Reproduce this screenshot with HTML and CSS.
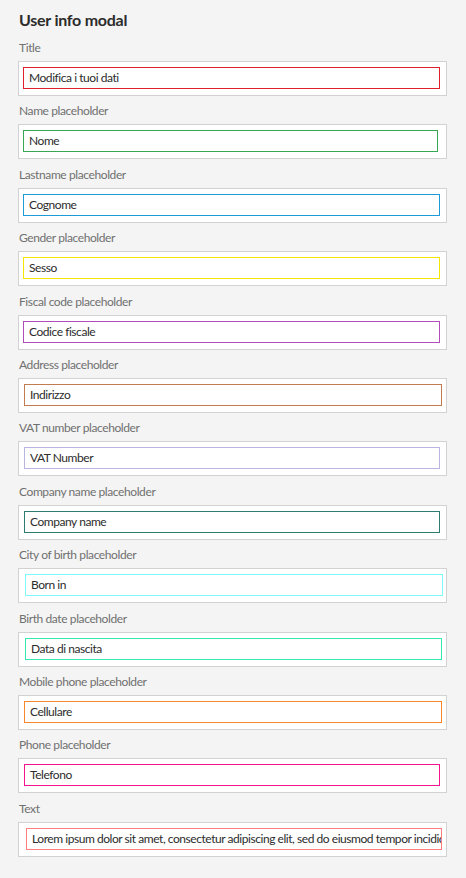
FILE: index.html
```html
<!DOCTYPE html>
<html lang="it">
<head>
<meta charset="utf-8">
<title>User info modal</title>
<link rel="stylesheet" href="styles.css">
</head>
<body>
<main class="page">
  <h1 class="heading">User info modal</h1>

  <div class="field">
    <div class="label">Title</div>
    <div class="frame"><div class="input c-title">Modifica i tuoi dati</div></div>
  </div>
  <div class="field">
    <div class="label">Name placeholder</div>
    <div class="frame"><div class="input c-name">Nome</div></div>
  </div>
  <div class="field">
    <div class="label">Lastname placeholder</div>
    <div class="frame"><div class="input c-lastname">Cognome</div></div>
  </div>
  <div class="field">
    <div class="label">Gender placeholder</div>
    <div class="frame"><div class="input c-gender">Sesso</div></div>
  </div>
  <div class="field">
    <div class="label">Fiscal code placeholder</div>
    <div class="frame"><div class="input c-fiscal">Codice fiscale</div></div>
  </div>
  <div class="field">
    <div class="label">Address placeholder</div>
    <div class="frame"><div class="input c-address">Indirizzo</div></div>
  </div>
  <div class="field">
    <div class="label">VAT number placeholder</div>
    <div class="frame"><div class="input c-vat">VAT Number</div></div>
  </div>
  <div class="field">
    <div class="label">Company name placeholder</div>
    <div class="frame"><div class="input c-company">Company name</div></div>
  </div>
  <div class="field">
    <div class="label">City of birth placeholder</div>
    <div class="frame"><div class="input c-city">Born in</div></div>
  </div>
  <div class="field">
    <div class="label">Birth date placeholder</div>
    <div class="frame"><div class="input c-birth">Data di nascita</div></div>
  </div>
  <div class="field">
    <div class="label">Mobile phone placeholder</div>
    <div class="frame"><div class="input c-mobile">Cellulare</div></div>
  </div>
  <div class="field">
    <div class="label">Phone placeholder</div>
    <div class="frame"><div class="input c-phone">Telefono</div></div>
  </div>
  <div class="field">
    <div class="label">Text</div>
    <div class="frame"><div class="input c-text">Lorem ipsum dolor sit amet, consectetur adipiscing elit, sed do eiusmod tempor incididunt</div></div>
  </div>
</main>
</body>
</html>
```

FILE: styles.css
```css
html, body {
  margin: 0;
  padding: 0;
  background: #f4f4f4;
}

body {
  font-family: Lato, "Open Sans", "Noto Sans", sans-serif;
  color: #2c2c2c;
  width: 466px;
  height: 878px;
  overflow: hidden;
}

.page {
  padding: 10px 19px 0 18px;
  display: flex;
  flex-direction: column;
}

.heading {
  margin: 0 0 10px 1px;
  font-size: 16px;
  line-height: 20px;
  font-weight: 700;
  letter-spacing: -0.25px;
  color: #2c2c2c;
}

.field {
  display: flex;
  flex-direction: column;
  gap: 5px;
  margin-bottom: 7.4px;
}

.label {
  margin-left: 1px;
  font-size: 12px;
  line-height: 16px;
  letter-spacing: -0.4px;
  color: #707070;
}

.frame {
  background: #ffffff;
  border: 1px solid #d2d2d2;
  padding: 5px 6px 6px 4px;
  height: 22px;
}

.input {
  box-sizing: border-box;
  height: 22px;
  border: 1px solid #888;
  padding: 0 5px;
  font-size: 12px;
  line-height: 20px;
  letter-spacing: -0.45px;
  color: #2c2c2c;
  white-space: nowrap;
  overflow: hidden;
}

.c-title { border-color: #e0202b; }
.c-name { border-color: #38a653; margin-right: 2px; }
.c-lastname { border-color: #1d9ad8; }
.c-gender { border-color: #f5e600; }
.c-fiscal { border-color: #b14cba; }
.c-address { border-color: #c17d50; margin-left: 1px; margin-right: -2px; }
.c-vat { border-color: #b9b5df; margin-left: 1px; }
.c-company { border-color: #2c7c70; margin-left: 1px; }
.c-city { border-color: #7ff8fb; margin-left: 2px; margin-right: -3px; }
.c-birth { border-color: #39e8b0; margin-left: 2px; margin-right: -2px; }
.c-mobile { border-color: #f7872f; margin-left: 1px; margin-right: -2px; }
.c-phone { border-color: #f5148c; margin-left: 1px; }
.c-text { border-color: #ff7e7e; margin-left: 3px; margin-right: -2px; }
```
